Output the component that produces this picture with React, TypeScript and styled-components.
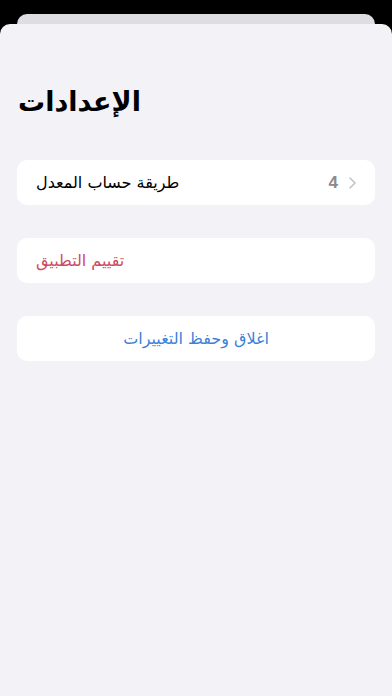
import styled, { createGlobalStyle } from 'styled-components';

const GlobalStyle = createGlobalStyle`
  html, body {
    margin: 0;
    padding: 0;
    background: #000;
  }
  body {
    font-family: "DejaVu Sans", "Noto Sans", sans-serif;
    -webkit-font-smoothing: antialiased;
  }
`;

const Screen = styled.div`
  width: 392px;
  height: 696px;
  background: #000;
  display: flex;
  flex-direction: column;
  overflow: hidden;
`;

const BackSheet = styled.div`
  margin: 14px 17px 0;
  height: 10px;
  flex-shrink: 0;
  background: #dedee2;
  border-radius: 10px 10px 0 0;
`;

const Sheet = styled.div`
  flex: 1;
  background: #f2f2f7;
  border-radius: 10px 10px 0 0;
  padding: 58px 17px 0;
  display: flex;
  flex-direction: column;
`;

const Title = styled.h1`
  margin: 0 0 38px 1px;
  font-size: 27px;
  font-weight: 700;
  color: #000;
  line-height: 40px;
`;

const Group = styled.div`
  background: #fff;
  border-radius: 10px;
  height: 45px;
  margin-bottom: 33px;
  display: flex;
  align-items: center;
  padding: 0 19px;
`;

const Label = styled.span<{ $tone?: 'default' | 'danger' | 'link' }>`
  font-size: 16px;
  color: ${p => (p.$tone === 'danger' ? '#cf4a62' : p.$tone === 'link' ? '#3b82d9' : '#000')};
`;

const CenterGroup = styled(Group)`
  justify-content: center;
`;

const Trailing = styled.div`
  margin-left: auto;
  display: flex;
  align-items: center;
  gap: 11px;
`;

const Value = styled.span`
  font-family: "Liberation Sans", sans-serif;
  font-size: 17px;
  font-weight: 700;
  color: #8a8a8e;
`;

const Chevron = () => (
  <svg width="7" height="12" viewBox="0 0 7 12" fill="none">
    <path d="M1 1l5 5-5 5" stroke="#c4c4c7" strokeWidth="1.6" strokeLinecap="round" strokeLinejoin="round" />
  </svg>
);

export default function App() {
  return (
    <Screen>
      <GlobalStyle />
      <BackSheet />
      <Sheet>
        <Title>الإعدادات</Title>
        <Group>
          <Label>طريقة حساب المعدل</Label>
          <Trailing>
            <Value>4</Value>
            <Chevron />
          </Trailing>
        </Group>
        <Group>
          <Label $tone="danger">تقييم التطبيق</Label>
        </Group>
        <CenterGroup>
          <Label $tone="link">اغلاق وحفظ التغييرات</Label>
        </CenterGroup>
      </Sheet>
    </Screen>
  );
}
